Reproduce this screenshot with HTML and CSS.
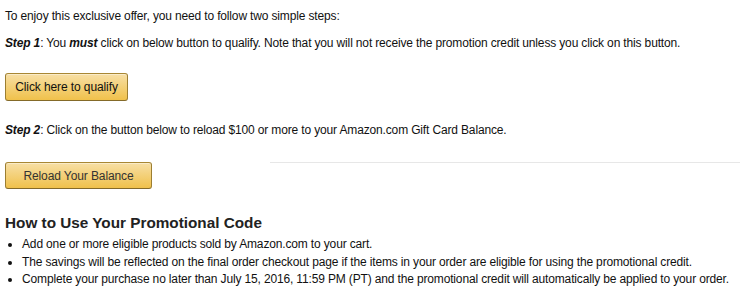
FILE: index.html
```html
<!DOCTYPE html>
<html>
<head>
<meta charset="utf-8">
<link rel="stylesheet" href="styles.css">
</head>
<body>
<div class="page">
  <p class="intro">To enjoy this exclusive offer, you need to follow two simple steps:</p>
  <p class="step"><b><i>Step 1</i></b>: You <b><i>must</i></b> click on below button to qualify. Note that you will not receive the promotion credit unless you click on this button.</p>
  <div class="btn-row first">
    <button class="btn btn-qualify">Click here to qualify</button>
  </div>
  <p class="step step2"><b><i>Step 2</i></b>: Click on the button below to reload $100 or more to your Amazon.com Gift Card Balance.</p>
  <div class="btn-row second">
    <button class="btn btn-reload">Reload Your Balance</button>
    <div class="rule"></div>
  </div>
  <h2 class="heading">How to Use Your Promotional Code</h2>
  <ul class="list">
    <li>Add one or more eligible products sold by Amazon.com to your cart.</li>
    <li>The savings will be reflected on the final order checkout page if the items in your order are eligible for using the promotional credit.</li>
    <li>Complete your purchase no later than July 15, 2016, 11:59 PM (PT) and the promotional credit will automatically be applied to your order.</li>
  </ul>
</div>
</body>
</html>
```

FILE: styles.css
```css
html, body {
  margin: 0;
  padding: 0;
  background: #fff;
}
body {
  font-family: "Liberation Sans", Arial, sans-serif;
  font-size: 12px;
  letter-spacing: -0.15px;
  color: #111;
}
.page {
  padding: 7px 5px 0 5px;
}
p {
  margin: 0;
  line-height: 18px;
}
.step {
  margin-top: 9px;
}
.step2 {
  margin-top: 20px;
}
.btn-row {
  display: flex;
  align-items: flex-start;
}
.btn-row.first {
  margin-top: 21px;
}
.btn-row.second {
  margin-top: 23px;
}
.btn {
  font-family: "Liberation Sans", Arial, sans-serif;
  font-size: 12px;
  letter-spacing: -0.1px;
  border: 1px solid;
  border-color: #a88734 #9c7e31 #846a29;
  border-radius: 3px;
  background: linear-gradient(to bottom, #f7dfa5, #f0c14b);
  box-shadow: inset 0 1px 0 rgba(255,255,255,0.4);
  padding: 0;
  margin: 0;
  cursor: pointer;
}
.btn-qualify {
  width: 123px;
  height: 28px;
  color: #111;
}
.btn-reload {
  width: 147px;
  height: 27px;
  color: #333;
}
.rule {
  flex: 1;
  margin-left: 118px;
  margin-right: -5px;
  border-top: 1px solid #e7e7e7;
}
.heading {
  margin: 24px 0 0 0;
  font-size: 15.3px;
  letter-spacing: 0;
  line-height: 20px;
  font-weight: bold;
  color: #222;
}
.list {
  margin: 3px 0 0 0;
  padding-left: 17px;
}
.list li {
  line-height: 17.5px;
}
```
